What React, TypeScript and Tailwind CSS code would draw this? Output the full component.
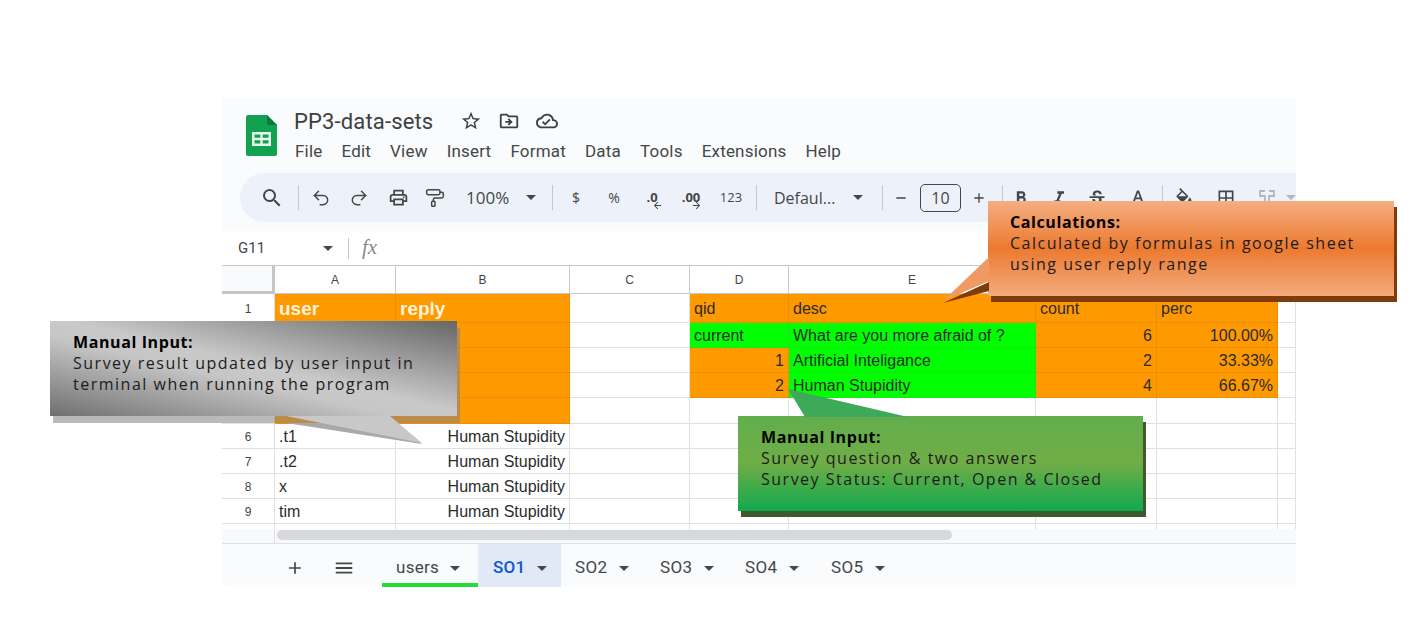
import type { ReactNode } from "react";
import { PaintRoller, Redo2, Undo2 } from "lucide-react";
import {
  MdAdd,
  MdArrowBack,
  MdArrowForward,
  MdBorderAll,
  MdFormatBold,
  MdFormatColorFill,
  MdFormatColorText,
  MdFormatItalic,
  MdMenu,
  MdOutlineCloudDone,
  MdOutlineDriveFileMove,
  MdOutlineLocalPrintshop,
  MdRemove,
  MdSearch,
  MdStarBorder,
  MdStrikethroughS,
} from "react-icons/md";

const menus = ["File", "Edit", "View", "Insert", "Format", "Data", "Tools", "Extensions", "Help"];

const tabs = [
  { label: "SO2", className: "w-[85px] pl-[14px]" },
  { label: "SO3", className: "w-[85px] pl-[14px]" },
  { label: "SO4", className: "w-[86px] pl-[14px]" },
  { label: "SO5", className: "w-[85px] pl-[14px]" },
];

const letters = ["A", "B", "C", "D", "E", "F", "G", "H"];

type Cell = { text?: string; fill?: "o" | "g"; right?: boolean };

const empty: Cell = {};
const o: Cell = { fill: "o" };

// rows 2-5 have their numbers covered by the grey callout
const rows: { id: string; n: string; cells: Cell[] }[] = [
  {
    id: "r1",
    n: "1",
    cells: [
      { text: "user", fill: "o" },
      { text: "reply", fill: "o" },
      empty,
      { text: "qid", fill: "o" },
      { text: "desc", fill: "o" },
      { text: "count", fill: "o" },
      { text: "perc", fill: "o" },
      empty,
    ],
  },
  {
    id: "r2",
    n: "",
    cells: [
      o,
      o,
      empty,
      { text: "current", fill: "g" },
      { text: "What are you more afraid of ?", fill: "g" },
      { text: "6", fill: "o", right: true },
      { text: "100.00%", fill: "o", right: true },
      empty,
    ],
  },
  {
    id: "r3",
    n: "",
    cells: [
      o,
      o,
      empty,
      { text: "1", fill: "o", right: true },
      { text: "Artificial Inteligance", fill: "g" },
      { text: "2", fill: "o", right: true },
      { text: "33.33%", fill: "o", right: true },
      empty,
    ],
  },
  {
    id: "r4",
    n: "",
    cells: [
      o,
      o,
      empty,
      { text: "2", fill: "o", right: true },
      { text: "Human Stupidity", fill: "g" },
      { text: "4", fill: "o", right: true },
      { text: "66.67%", fill: "o", right: true },
      empty,
    ],
  },
  { id: "r5", n: "", cells: [o, o, empty, empty, empty, empty, empty, empty] },
  {
    id: "r6",
    n: "6",
    cells: [{ text: ".t1" }, { text: "Human Stupidity", right: true }, empty, empty, empty, empty, empty, empty],
  },
  {
    id: "r7",
    n: "7",
    cells: [{ text: ".t2" }, { text: "Human Stupidity", right: true }, empty, empty, empty, empty, empty, empty],
  },
  {
    id: "r8",
    n: "8",
    cells: [{ text: "x" }, { text: "Human Stupidity", right: true }, empty, empty, empty, empty, empty, empty],
  },
  {
    id: "r9",
    n: "9",
    cells: [{ text: "tim" }, { text: "Human Stupidity", right: true }, empty, empty, empty, empty, empty, empty],
  },
  { id: "r10", n: "", cells: [empty, empty, empty, empty, empty, empty, empty, empty] },
];

function Caret({ className = "" }: { className?: string }) {
  return (
    <span
      className={`inline-block h-0 w-0 border-x-[5px] border-t-[5px] border-x-transparent border-t-[#444746] ${className}`}
    />
  );
}

function Sep({ className }: { className: string }) {
  return <span className={`h-[25px] w-px shrink-0 bg-[#c7c7c7] ${className}`} />;
}

function SheetsLogo() {
  return (
    <svg viewBox="0 0 31 41" className="h-[41px] w-[31px] shrink-0">
      <path d="M2 0H21L31 10V39a2 2 0 0 1-2 2H2a2 2 0 0 1-2-2V2a2 2 0 0 1 2-2Z" fill="#12a150" />
      <path d="M21 0V8a2 2 0 0 0 2 2H31Z" fill="#0c7a3c" />
      <path d="M6 17H25V31H6ZM8.500 19.500V22.800H14.300V19.500ZM16.700 19.500V22.800H22.500V19.500ZM8.500 25.200V28.500H14.300V25.200ZM16.700 25.200V28.500H22.500V25.200Z" fill="#e8f5ec" fillRule="evenodd" />
    </svg>
  );
}

function MergeIcon() {
  return (
    <svg viewBox="0 0 20 20" className="ml-[21px] size-5 shrink-0" fill="none" stroke="#b4b7ba" strokeWidth="1.800">
      <path d="M8 3H3V8H8V13" />
      <path d="M12 3H17V8H12V13" />
      <path d="M1 17H19" />
    </svg>
  );
}

function Toolbar() {
  return (
    <div className="ml-[18px] flex h-[49px] items-center rounded-l-full bg-[#edf2fa] pl-[20px] text-[#444746]">
      <MdSearch className="size-6 shrink-0" />
      <Sep className="ml-[14px]" />
      <Undo2 className="ml-[12px] size-5 shrink-0" strokeWidth={1.8} />
      <Redo2 className="ml-[18px] size-5 shrink-0" strokeWidth={1.8} />
      <MdOutlineLocalPrintshop className="ml-[19px] size-[21px] shrink-0" />
      <PaintRoller className="ml-[16px] size-5 shrink-0" strokeWidth={1.8} />
      <span className="ml-[21px] w-[45px] shrink-0 text-[17px]">100%</span>
      <Caret className="ml-[15px] shrink-0" />
      <Sep className="ml-[16px]" />
      <span className="ml-[13px] w-5 shrink-0 text-center text-[14px]">$</span>
      <span className="ml-[18px] w-5 shrink-0 text-center text-[14px]">%</span>
      <span className="relative ml-[18px] h-5 w-5 shrink-0 text-center text-[13px] leading-[18px] font-bold">
        .0
        <MdArrowBack className="absolute top-[12px] left-[10px] size-[11px]" />
      </span>
      <span className="relative ml-[19px] h-5 w-5 shrink-0 text-center text-[13px] leading-[18px] font-bold">
        .00
        <MdArrowForward className="absolute top-[12px] left-[10px] size-[11px]" />
      </span>
      <span className="ml-[18px] w-6 shrink-0 text-center text-[13px]">123</span>
      <Sep className="ml-[13px]" />
      <span className="ml-[17px] w-[64px] shrink-0 text-[16px]">Defaul...</span>
      <Caret className="ml-[15px] shrink-0" />
      <Sep className="ml-[19px]" />
      <MdRemove className="ml-[10px] size-4 shrink-0" />
      <span className="ml-[11px] flex h-[28px] w-[41px] shrink-0 items-center justify-center rounded-[5px] border border-[#444746] text-[16px]">
        10
      </span>
      <MdAdd className="ml-[10px] size-4 shrink-0" />
      <Sep className="ml-[15px]" />
      <MdFormatBold className="ml-[8px] size-5 shrink-0" />
      <MdFormatItalic className="ml-[18px] size-5 shrink-0" />
      <MdStrikethroughS className="ml-[18px] size-5 shrink-0" />
      <MdFormatColorText className="ml-[21px] size-5 shrink-0" />
      <Sep className="ml-[14px]" />
      <MdFormatColorFill className="ml-[11px] size-5 shrink-0" />
      <MdBorderAll className="ml-[22px] size-5 shrink-0" />
      <MergeIcon />
      <Caret className="ml-[9px] shrink-0 border-t-[#b4b7ba]" />
    </div>
  );
}

function SheetGrid() {
  const template = "grid grid-cols-[53px_121px_174px_120px_99px_247px_121px_121px_18px]";
  return (
    <div className="h-[264px] overflow-hidden border-t border-[#c7c7c7] bg-white font-['Liberation_Sans',sans-serif]">
      <div className={`${template} h-[28px]`}>
        <div className="border-r-[3px] border-b-[3px] border-[#c4c7c5] bg-[#f8f9fa]" />
        {letters.map((letter) => (
          <div
            key={letter}
            className="flex items-center justify-center border-r border-b border-[#c9c9c9] text-[12px] text-[#444]"
          >
            {letter === "H" ? "" : letter}
          </div>
        ))}
      </div>
      {rows.map((row) => (
        <div
          key={row.id}
          className={`${template} ${row.id === "r1" ? "h-[29px]" : row.id === "r5" ? "h-[26px]" : "h-[25px]"}`}
        >
          <div className="flex items-center justify-center border-r border-b border-[#e0e0e0] pt-px text-[12px] text-[#444]">
            {row.n}
          </div>
          {row.cells.map((cell, i) => {
            const fill =
              cell.fill === "o"
                ? "bg-[#ff9900] border-[#ea8f0c]"
                : cell.fill === "g"
                  ? "bg-[#00ff00] border-[#19e619]"
                  : "border-[#e0e0e0]";
            const headline = row.id === "r1" && i < 2;
            return (
              <div
                key={i}
                className={`flex items-center overflow-hidden border-r border-b px-[4px] pt-[2px] whitespace-nowrap ${fill} ${cell.right ? "justify-end" : ""} ${headline ? "text-[19px] font-bold text-[#fdf3dc]" : "text-[16px] text-[#2b2b2b]"}`}
              >
                {cell.text}
              </div>
            );
          })}
        </div>
      ))}
    </div>
  );
}

function Callout({
  heading,
  lines,
  className,
  tail,
}: {
  heading: string;
  lines: string[];
  className: string;
  tail: ReactNode;
}) {
  return (
    <div
      className={`absolute h-[95px] w-[405px] font-['Open_Sans',sans-serif] text-[16px] leading-[21px] tracking-[1.5px] whitespace-nowrap text-[#1c1c1c] ${className}`}
    >
      {tail}
      <div className="font-bold tracking-[0.6px] text-black">{heading}</div>
      {lines.map((line) => (
        <div key={line}>{line}</div>
      ))}
    </div>
  );
}

export default function App() {
  return (
    <div className="relative h-[630px] w-[1422px] overflow-hidden bg-white pt-[98px] pl-[222px] font-['Open_Sans',sans-serif]">
      <div className="flex h-[489px] w-[1074px] flex-col overflow-hidden rounded-bl-[6px] bg-white">
        <div className="h-[133px] shrink-0 bg-[#f9fbfd]">
          <div className="flex h-[75px] pt-[17px] pl-[24px]">
            <SheetsLogo />
            <div className="ml-[17px] -mt-[9px]">
              <div className="flex h-[30px] items-center text-[#3c4043]">
                <span className="w-[139px] font-['Roboto',sans-serif] text-[22px] tracking-[0.15px] whitespace-nowrap">
                  PP3-data-sets
                </span>
                <MdStarBorder className="ml-[27px] size-[22px]" />
                <MdOutlineDriveFileMove className="ml-[16px] size-[22px]" />
                <MdOutlineCloudDone className="ml-[16px] size-[22px]" />
              </div>
              <div className="mt-[3px] flex gap-[19px] pl-px font-['Roboto',sans-serif] text-[17px] leading-[24px] tracking-[0.2px] text-[#444746]">
                {menus.map((menu) => (
                  <span key={menu}>{menu}</span>
                ))}
              </div>
            </div>
          </div>
          <Toolbar />
        </div>

        <div className="flex h-[34px] shrink-0 items-center bg-white pl-[16px] text-[#444746]">
          <span className="w-[85px] font-['Roboto',sans-serif] text-[15px]">G11</span>
          <Caret />
          <Sep className="ml-[15px] !h-[21px]" />
          <span className="ml-[13px] font-['Liberation_Serif',serif] text-[21px] text-[#8a8a8a] italic">fx</span>
        </div>

        <SheetGrid />

        <div className="flex h-[14px] shrink-0 bg-[#f8f9fa]">
          <div className="w-[53px] border-r border-[#e0e0e0]" />
          <div className="ml-[2px] mt-[1px] h-[10px] w-[675px] rounded-full bg-[#d6d8db]" />
        </div>

        <div className="flex h-[44px] shrink-0 items-stretch border-t border-[#e0e0e0] bg-[#f9fbfd] pt-[5px] font-['Roboto',sans-serif] text-[17px] tracking-[0.3px] text-[#444746]">
          <div className="flex w-[160px] items-center pl-[63px]">
            <MdAdd className="size-5 shrink-0" />
            <MdMenu className="ml-[28px] size-[22px] shrink-0" />
          </div>
          <div className="-mt-[5px] flex w-[96px] items-center gap-[11px] border-b-4 border-[#22dd33] pt-[9px] pl-[14px]">
            users
            <Caret />
          </div>
          <div className="-mt-[5px] flex w-[83px] items-center gap-[11px] bg-[#e1e9f7] pt-[5px] pl-[15px] font-medium text-[#0b57d0]">
            SO1
            <Caret className="border-t-[#0b57d0]" />
          </div>
          {tabs.map((tab) => (
            <div key={tab.label} className={`flex items-center gap-[12px] ${tab.className}`}>
              {tab.label}
              <Caret />
            </div>
          ))}
        </div>
      </div>

      <Callout
        heading="Manual Input:"
        lines={["Survey result updated by user input in", "terminal when running the program"]}
        className="top-[321px] left-[50px] !w-[407px] bg-[linear-gradient(to_bottom_left,#666666_0%,#c9c9c9_48%,#c6c6c6_58%,#6f6f6f_100%)] px-[23px] pt-[11px] shadow-[3px_7px_0_rgba(130,130,130,0.55)]"
        tail={
          <svg className="absolute top-[95px] left-[236px] h-[28px] w-[140px]" viewBox="0 0 140 28">
            <polygon points="0,7 136,28 106,7" fill="#a9a9a9" />
            <polygon points="0,0 136,27 104,0" fill="#c8c8c8" />
          </svg>
        }
      />

      <Callout
        heading="Calculations:"
        lines={["Calculated by formulas in google sheet", "using user reply range"]}
        className="top-[201px] left-[988px] !w-[406px] bg-[linear-gradient(180deg,#f4ae82_0%,#ec7a2f_50%,#f3ab7e_100%)] px-[22px] pt-[11px] shadow-[3px_6px_0_#7f3c0a]"
        tail={
          <svg className="absolute top-[56px] left-[-45px] h-[48px] w-[46px]" viewBox="0 0 46 48">
            <polygon points="0,46 46,25 46,34" fill="#7f3c0a" />
            <polygon points="0,44 46,0 46,24" fill="#ee9a62" />
          </svg>
        }
      />

      <Callout
        heading="Manual Input:"
        lines={["Survey question & two answers", "Survey Status: Current, Open & Closed"]}
        className="top-[416px] left-[738px] bg-[linear-gradient(180deg,#62ae4d_0%,#70ad47_50%,#10a94f_100%)] px-[23px] pt-[11px] shadow-[3px_6px_0_#3f5a2d]"
        tail={
          <svg className="absolute top-[-27px] left-[49px] h-[28px] w-[122px]" viewBox="0 0 122 28">
            <polygon points="1,0 18,28 121,28" fill="#3fa95a" />
          </svg>
        }
      />
    </div>
  );
}
